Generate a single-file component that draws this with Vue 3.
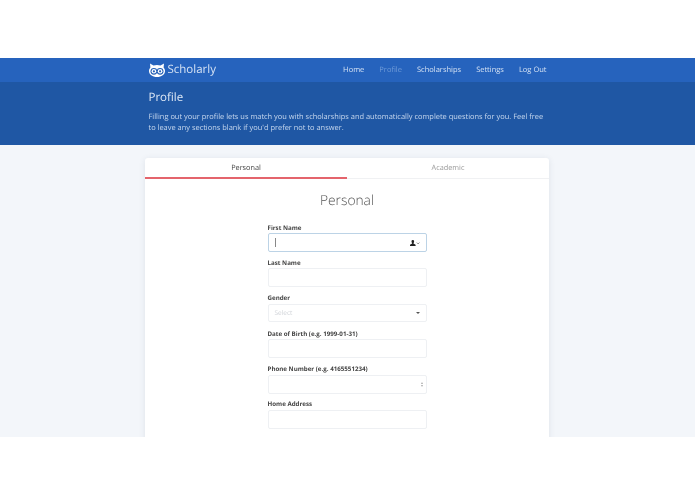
<script setup>
const navLinks = [
  { label: 'Home' },
  { label: 'Profile', active: true },
  { label: 'Scholarships' },
  { label: 'Settings' },
  { label: 'Log Out' },
]
</script>

<template>
  <div class="page">
    <div class="viewport">
      <nav class="nav">
        <div class="inner nav-inner">
          <div class="brand">
            <svg class="owl" width="16" height="14" viewBox="0 0 16 14">
              <path fill="#fff" d="M1 0.5 L4.5 2.6 C6.5 1.9 9.5 1.9 11.5 2.6 L15 0.5 L14.6 4.5 C15.7 5.700 16 7 16 8 C16 11.500 12.500 14 8 14 C3.500 14 0 11.500 0 8 C0 7 .3 5.700 1.400 4.500 Z"/>
              <circle cx="4.900" cy="8.300" r="3.400" fill="#2461b8"/>
              <circle cx="11.100" cy="8.300" r="3.400" fill="#2461b8"/>
              <circle cx="4.900" cy="8.300" r="2.300" fill="#fff"/>
              <circle cx="11.100" cy="8.300" r="2.300" fill="#fff"/>
              <circle cx="4.900" cy="8.300" r="1.100" fill="#2461b8"/>
              <circle cx="11.100" cy="8.300" r="1.100" fill="#2461b8"/>
            </svg>
            <span>Scholarly</span>
          </div>
          <div class="links">
            <a v-for="l in navLinks" :key="l.label" :class="{ active: l.active }">{{ l.label }}</a>
          </div>
        </div>
      </nav>
      <header class="hero">
        <div class="inner">
          <h1>Profile</h1>
          <p>Filling out your profile lets us match you with scholarships and automatically complete questions for you. Feel free to leave any sections blank if you'd prefer not to answer.</p>
        </div>
      </header>
      <main class="main">
        <section class="card">
          <div class="tabs">
            <div class="tab on">Personal</div>
            <div class="tab">Academic</div>
          </div>
          <h2>Personal</h2>
          <form class="form">
            <label>First Name</label>
            <div class="input focus">
              <i class="caret"></i>
              <svg class="person" width="10" height="6" viewBox="0 0 10 6">
                <path fill="#222" d="M2.800 0a1.300 1.300 0 0 1 1.300 1.400c0 .7-.3 1.200-.6 1.500v.5L5.600 4.700V6H0V4.700L2.100 3.400v-.5c-.3-.3-.6-.8-.6-1.500A1.300 1.300 0 0 1 2.800 0z"/>
                <path fill="none" stroke="#777" stroke-width=".9" d="M6.800 2.600 L8.100 3.900 L9.400 2.600"/>
              </svg>
            </div>
            <label>Last Name</label>
            <div class="input"></div>
            <label>Gender</label>
            <div class="input select">
              <span class="placeholder">Select</span>
              <i class="arrow"></i>
            </div>
            <label>Date of Birth (e.g. 1999-01-31)</label>
            <div class="input"></div>
            <label>Phone Number (e.g. 4165551234)</label>
            <div class="input number">
              <span class="spin">
                <i class="up"></i>
                <i class="down"></i>
              </span>
            </div>
            <label>Home Address</label>
            <div class="input"></div>
            <label>City</label>
          </form>
        </section>
      </main>
    </div>
  </div>
</template>

<style>
html, body { margin: 0; background: #fff; }
</style>

<style scoped>
.page {
  width: 695px;
  height: 494px;
  padding-top: 58px;
  box-sizing: border-box;
  background: #fff;
  font-family: "Open Sans", sans-serif;
  text-rendering: geometricPrecision;
  overflow: hidden;
}
.viewport {
  height: 379px;
  overflow: hidden;
  background: #f3f6fa;
  display: flex;
  flex-direction: column;
  filter: blur(0.3px);
}
.inner {
  width: 398px;
  margin: 0 auto;
}
.nav {
  height: 24px;
  flex: none;
  background: #2663bd;
}
.nav-inner {
  height: 100%;
  display: flex;
  align-items: center;
  justify-content: space-between;
}
.brand {
  display: flex;
  align-items: center;
  gap: 3px;
  color: #d5e2f4;
  font-size: 11.500px;
  line-height: 24px;
}
.owl { flex: none; }
.links {
  display: flex;
  gap: 15px;
  font-size: 7.500px;
  color: #d5e2f4;
}
.links .active { color: #6f9bd8; }
.hero {
  height: 63px;
  flex: none;
  box-sizing: border-box;
  padding-top: 7px;
  background: #1f57a4;
  color: #fff;
}
.hero h1 {
  margin: 0;
  font-size: 11.500px;
  font-weight: 400;
  line-height: 17px;
  color: #dfe9f6;
}
.hero p {
  margin: 6px 0 0;
  font-size: 7.450px;
  line-height: 10.500px;
  color: #c6d7ee;
}
.main {
  padding: 13px 1px 0 0;
  flex: 1;
}
.card {
  width: 404px;
  margin: 0 auto;
  background: #fff;
  border-radius: 3px;
  box-shadow: 0 1px 6px rgba(40, 60, 90, 0.1);
  height: 400px;
}
.tabs {
  display: flex;
  height: 21px;
  border-bottom: 1px solid #f0f1f3;
  box-sizing: border-box;
}
.tab {
  flex: 1;
  text-align: center;
  font-size: 7.300px;
  line-height: 20px;
  color: #999;
  height: 21px;
  box-sizing: border-box;
}
.tab.on {
  color: #444;
  border-bottom: 2px solid #e4646c;
}
h2 {
  margin: 0;
  padding-top: 12px;
  text-align: center;
  font-size: 13.800px;
  font-weight: 300;
  line-height: 19px;
  color: #555;
}
.form {
  width: 159px;
  margin: 0 auto;
  padding-top: 13.500px;
}
label {
  display: block;
  font-size: 6.200px;
  font-weight: 700;
  line-height: 8px;
  color: #444;
  margin-bottom: 1.500px;
}
.input {
  height: 19px;
  box-sizing: border-box;
  border: 1px solid #eef0f3;
  border-radius: 2px;
  background: #fff;
  margin-bottom: 6.900px;
  position: relative;
  display: flex;
  align-items: center;
  padding: 0 6px;
}
.input.focus {
  border-color: #bcd3e6;
  justify-content: space-between;
}
.caret {
  width: 1px;
  height: 9px;
  background: #888;
}
.select { height: 18px; justify-content: space-between; margin-bottom: 7.900px; }
.placeholder {
  font-size: 6.500px;
  color: #d0d3d8;
}
.arrow {
  width: 0;
  height: 0;
  border-left: 2px solid transparent;
  border-right: 2px solid transparent;
  border-top: 2px solid #555;
}
.number { justify-content: flex-end; }
.spin {
  display: flex;
  flex-direction: column;
  gap: 1px;
  margin-right: -3px;
}
.spin i {
  width: 0;
  height: 0;
  border-left: 1.500px solid transparent;
  border-right: 1.500px solid transparent;
}
.up { border-bottom: 2px solid #aaa; }
.down { border-top: 2px solid #aaa; }
</style>
